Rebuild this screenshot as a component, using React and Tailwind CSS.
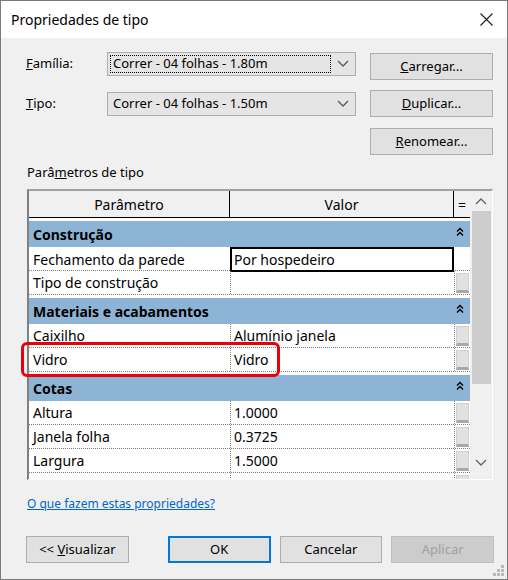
import React from "react";

const font = { fontFamily: '"Noto Sans", "Open Sans", sans-serif' };

function Chevron({ up = false, className = "" }) {
  return (
    <svg width="12" height="8" viewBox="0 0 12 8" className={className}>
      <path
        d={up ? "M1 7 L6 2 L11 7" : "M1 1 L6 6 L11 1"}
        fill="none"
        stroke="currentColor"
        strokeWidth="1.3"
      />
    </svg>
  );
}

function DoubleUp() {
  return (
    <svg width="8" height="10" viewBox="0 0 8 10" className="text-black">
      <path d="M1 4.5 L4 1.5 L7 4.5 M1 8.5 L4 5.5 L7 8.5" fill="none" stroke="currentColor" strokeWidth="1.4" />
    </svg>
  );
}

function Combo({ value, focus }) {
  return (
    <div className="w-[249px] h-[24px] bg-[#e5e5e5] border border-[#adadad] flex items-center pl-[2px] pr-[6px]">
      <div
        className={`flex-1 h-[18px] flex items-center pl-[2px] text-[13px] text-black ${
          focus ? "border border-dotted border-black" : "border border-transparent"
        }`}
      >
        {value}
      </div>
      <Chevron className="ml-[6px] text-[#555]" />
    </div>
  );
}

function Btn({ children, className = "", variant = "normal" }) {
  const look =
    variant === "default"
      ? "bg-[#e1e1e1] border-2 border-[#0078d7] text-black"
      : variant === "disabled"
      ? "bg-[#cccccc] border border-[#bfbfbf] text-[#a0a0a0]"
      : "bg-[#e1e1e1] border border-[#adadad] text-black";
  return (
    <div className={`h-[27px] flex items-center justify-center text-[13px] ${look} ${className}`}>
      {children}
    </div>
  );
}

function Group({ title }) {
  return (
    <div className="pt-[3px] bg-white">
      <div className="h-[26px] bg-[#8eb4d5] flex items-center justify-between pl-[4px] pr-[6px]">
        <span className="font-bold text-[14px] text-black">{title}</span>
        <span className="mb-[4px]">
          <DoubleUp />
        </span>
      </div>
    </div>
  );
}

function Row({ name, value, editing, noButton }) {
  return (
    <div className="grid grid-cols-[201px_224px_16px] h-[24px] border-b border-dotted border-[#808080] bg-white text-[14px] text-black">
      <div className="pl-[4px] flex items-center">{name}</div>
      {editing ? (
        <div className="border-2 border-black pl-[2px] flex items-center">{value}</div>
      ) : (
        <div className="border-l border-dotted border-[#808080] pl-[3px] flex items-center">{value}</div>
      )}
      <div className={`${editing ? "" : "border-l border-dotted border-[#808080]"} flex items-center justify-center`}>
        {!noButton && (
          <div className="w-[13px] h-[20px] bg-[#e1e1e1] border border-[#d0d0d0] border-b-[3px] border-b-[#a8a8a8]" />
        )}
      </div>
    </div>
  );
}

export default function App() {
  return (
    <div style={font} className="w-[508px] h-[580px] border border-[#7a7a7a] bg-[#f0f0f0] flex flex-col relative select-none">
      {/* title bar */}
      <div className="h-[37px] bg-white flex items-center justify-between pl-[10px] pr-[14px]">
        <span className="text-[14px] text-black">Propriedades de tipo</span>
        <svg width="13" height="13" viewBox="0 0 13 13">
          <path d="M0.5 0.5 L12.5 12.5 M12.5 0.5 L0.5 12.5" stroke="#222" strokeWidth="1.2" />
        </svg>
      </div>

      <div className="flex-1 pl-[25px] pr-[13px]">
        {/* top rows */}
        <div className="flex mt-[14px]">
          <div className="flex flex-col">
            <div className="flex items-center h-[24px]">
              <span className="w-[81px] text-[13px] text-black">
                <u>F</u>amília:
              </span>
              <Combo value="Correr - 04 folhas - 1.80m" focus />
            </div>
            <div className="flex items-center h-[24px] mt-[16px]">
              <span className="w-[81px] text-[13px] text-black">
                <u>T</u>ipo:
              </span>
              <Combo value="Correr - 04 folhas - 1.50m" />
            </div>
          </div>
          <div className="flex flex-col gap-[11px] ml-[14px] w-[123px] mt-[1px]">
            <Btn>
              <span><u>C</u>arregar...</span>
            </Btn>
            <Btn className="-mt-[1px]">
              <span><u>D</u>uplicar...</span>
            </Btn>
            <Btn>
              <span><u>R</u>enomear...</span>
            </Btn>
          </div>
        </div>

        <div className="mt-[8px] ml-[1px] text-[13px] text-black h-[20px] flex items-center">
          Parâ<u>m</u>etros de tipo
        </div>

        {/* table */}
        <div className="mt-[6px] ml-[1px] w-[466px] h-[291px] border-t-2 border-l-2 border-t-[#a0a0a0] border-l-[#808080] border-r border-b border-r-white border-b-white flex relative">
          <div className="w-[441px] h-full overflow-hidden bg-white">
            <div className="grid grid-cols-[201px_224px_16px] h-[27px] bg-[#f0f0f0] border-b border-black text-[14px] text-black">
              <div className="flex items-center justify-center border-r border-black">Parâmetro</div>
              <div className="flex items-center justify-center border-r border-black">Valor</div>
              <div className="flex items-center justify-center">=</div>
            </div>
            <Group title="Construção" />
            <Row name="Fechamento da parede" value="Por hospedeiro" editing noButton />
            <Row name="Tipo de construção" value="" />
            <Group title="Materiais e acabamentos" />
            <Row name="Caixilho" value="Alumínio janela" />
            <Row name="Vidro" value="Vidro" />
            <Group title="Cotas" />
            <Row name="Altura" value="1.0000" />
            <Row name="Janela folha" value="0.3725" />
            <Row name="Largura" value="1.5000" />
            <Row name="" value="" />
          </div>
          {/* scrollbar */}
          <div className="w-[22px] h-full bg-[#f0f0f0] flex flex-col items-center">
            <div className="h-[20px] flex items-center justify-center text-[#606060]">
              <Chevron up />
            </div>
            <div className="w-[19px] h-[173px] bg-[#cdcdcd]" />
            <div className="flex-1" />
            <div className="h-[20px] flex items-center justify-center text-[#606060] mb-[6px]">
              <Chevron />
            </div>
          </div>
          {/* highlight */}
          <div className="absolute left-[-8px] top-[151px] w-[259px] h-[35px] border-[3px] border-[#e8000b] rounded-[6px] pointer-events-none" />
        </div>

        <div className="mt-[15px] ml-[1px] h-[18px] flex items-center">
          <span className="text-[12px] text-[#0066cc] underline">O que fazem estas propriedades?</span>
        </div>

        {/* bottom buttons */}
        <div className="flex mt-[23px]">
          <Btn className="w-[103px]">
            <span>&lt;&lt; <u>V</u>isualizar</span>
          </Btn>
          <Btn variant="default" className="w-[103px] ml-[39px]">OK</Btn>
          <Btn className="w-[103px] ml-[9px]">Cancelar</Btn>
          <Btn variant="disabled" className="w-[103px] ml-[9px]">Aplicar</Btn>
        </div>
      </div>

      {/* resize grip */}
      <svg width="12" height="12" viewBox="0 0 12 12" className="absolute right-[2px] bottom-[2px]">
        <g fill="#b8b8b8">
          <rect x="8" y="0" width="3" height="3" />
          <rect x="4" y="4" width="3" height="3" />
          <rect x="8" y="4" width="3" height="3" />
          <rect x="0" y="8" width="3" height="3" />
          <rect x="4" y="8" width="3" height="3" />
          <rect x="8" y="8" width="3" height="3" />
        </g>
      </svg>
    </div>
  );
}
